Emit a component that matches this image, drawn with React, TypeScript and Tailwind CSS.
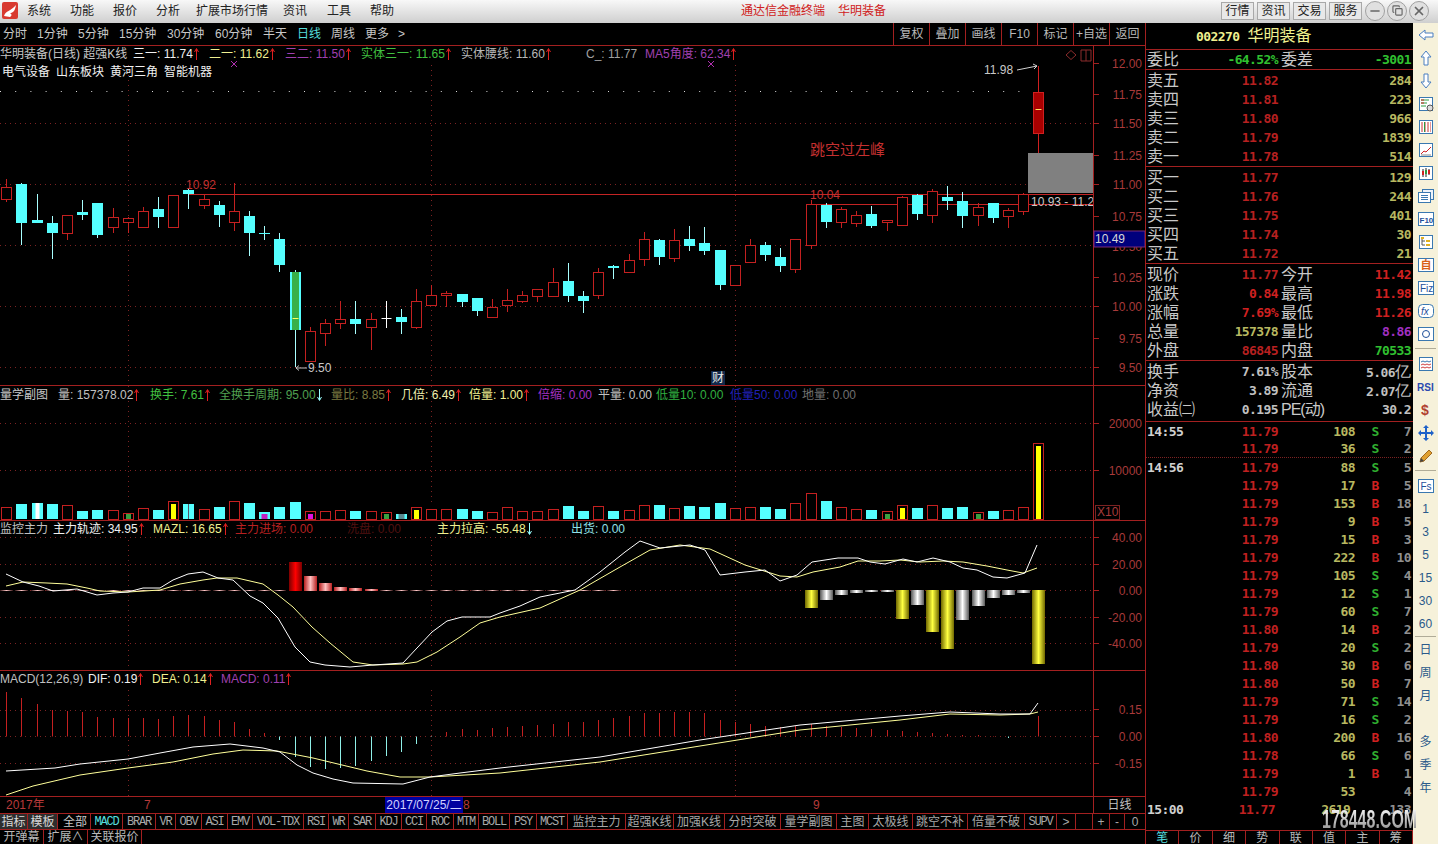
import { Copy, Minus, X } from "lucide-react";
import type { ReactNode } from "react";

const LINE = "#a32020";
const GRID = "#7c2222";
const AXIS = "#a83a3a";
const RED = "#c42020";
const CYAN = "#55ffff";

const xAt = (i: number) => Math.round(6.3 + 15.176 * i);

// high, body top, body bottom, low, kind
type Candle = [number, number, number, number, "r" | "c" | "w"];
const candles: Candle[] = [
  [179, 187, 199, 202, "r"], [183, 184, 223, 245, "c"], [194, 220, 223, 223, "c"], [216, 223, 233, 259, "c"],
  [215, 215, 233, 240, "r"], [200, 212, 215, 220, "c"], [203, 203, 235, 238, "c"], [208, 217, 227, 233, "r"],
  [217, 218, 222, 233, "r"], [207, 211, 227, 227, "r"], [197, 209, 217, 228, "c"], [195, 195, 227, 228, "r"],
  [189, 190, 194, 209, "c"], [194, 199, 205, 209, "r"], [201, 205, 215, 227, "c"], [183, 211, 222, 231, "r"],
  [211, 216, 233, 256, "c"], [226, 233, 234, 240, "c"], [233, 239, 265, 272, "c"], [270, 272, 330, 367, "c"],
  [327, 331, 361, 361, "r"], [319, 323, 333, 346, "r"], [301, 319, 323, 329, "r"], [301, 319, 324, 334, "c"],
  [313, 319, 327, 350, "r"], [301, 318, 319, 328, "w"], [309, 317, 322, 334, "c"], [289, 301, 327, 329, "r"],
  [285, 295, 305, 305, "r"], [291, 293, 295, 307, "r"], [294, 294, 302, 307, "c"], [298, 298, 311, 316, "c"],
  [299, 307, 317, 317, "r"], [289, 300, 305, 312, "r"], [291, 295, 301, 303, "r"], [289, 289, 296, 302, "r"],
  [268, 282, 296, 296, "r"], [263, 281, 296, 302, "c"], [291, 296, 301, 313, "c"], [268, 272, 295, 299, "r"],
  [265, 266, 268, 279, "c"], [254, 260, 272, 272, "r"], [232, 239, 259, 266, "r"], [239, 240, 257, 265, "c"],
  [229, 240, 258, 262, "r"], [226, 239, 246, 251, "c"], [227, 243, 251, 255, "c"], [250, 250, 285, 290, "c"],
  [265, 265, 285, 285, "r"], [239, 245, 262, 262, "r"], [242, 245, 255, 261, "c"], [248, 257, 266, 272, "c"],
  [239, 239, 269, 273, "r"], [200, 204, 245, 249, "r"], [203, 205, 222, 228, "c"], [207, 209, 222, 228, "r"],
  [211, 215, 223, 227, "r"], [206, 214, 226, 228, "c"], [220, 220, 222, 231, "r"], [196, 197, 225, 225, "r"],
  [194, 195, 214, 220, "c"], [189, 191, 215, 223, "r"], [186, 197, 201, 210, "c"], [192, 201, 216, 228, "c"],
  [203, 207, 215, 226, "r"], [203, 203, 218, 223, "c"], [208, 210, 216, 228, "r"], [193, 194, 211, 215, "r"],
  [66, 92, 133, 153, "r"],
];

const volTops = [
  507, 504, 503, 504, 505, 511, 510, 510, 513, 508, 510, 501, 504, 509, 507, 501, 503, 512, 507, 502, 511, 511, 510,
  511, 511, 512, 514, 507, 509, 509, 509, 511, 512, 507, 511, 511, 509, 506, 511, 506, 511, 510, 505, 505, 508, 506,
  507, 503, 508, 507, 507, 509, 503, 493, 501, 507, 509, 510, 511, 505, 508, 505, 508, 507, 512, 511, 510, 507, 443,
];
const volInner: Record<number, string> = {
  8: "#3aa040", 11: "#ffff00", 17: "#c020c0", 20: "#e010e0", 25: "#3aa040", 27: "#ffff00",
  58: "#3aa040", 59: "#ffff00", 64: "#3aa040", 68: "#ffff00", 26: "#5a8a90",
};
const volCyan = [1, 2, 3, 5, 6, 10, 12, 14, 16, 17, 18, 19, 23, 26, 30, 31, 37, 38, 40, 43, 45, 46, 47, 50, 51, 54, 57, 60, 62, 63, 65];

const redBars: [number, number, string][] = [
  [19, 562, "url(#gRed)"], [20, 576, "url(#gPink)"], [21, 583, "url(#gPink)"], [22, 587, "url(#gPink)"], [23, 588, "url(#gPink)"], [24, 589, "url(#gPink)"],
];
const lowBars: [number, number, string][] = [
  [53, 608, "url(#gYel)"], [54, 600, "url(#gWht)"], [55, 595, "url(#gWht)"], [56, 593, "url(#gWht)"], [57, 592, "url(#gWht)"], [58, 592, "url(#gWht)"],
  [59, 619, "url(#gYel)"], [60, 605, "url(#gWht)"], [61, 632, "url(#gYel)"], [62, 649, "url(#gYel)"], [63, 620, "url(#gWht)"], [64, 606, "url(#gWht)"],
  [65, 598, "url(#gWht)"], [66, 595, "url(#gWht)"], [67, 593, "url(#gWht)"], [68, 664, "url(#gYel)"],
];

const macdTops = [
  692, 698, 704, 710, 711, 712, 717, 718, 718, 718, 719, 716, 715, 716, 720, 722, 729, 733, 740, 757, 767, 769, 768, 766, 761, 756, 752, 744, 737,
  732, 729, 730, 728, 727, 726, 725, 724, 722, 722, 720, 718, 716, 713, 713, 712, 712, 713, 720, 722, 724, 726, 727, 726, 724, 726, 727, 728, 729,
  730, 731, 732, 733, 734, 735, 735, 736, 738, 736, 716,
];

const monWhite = "6,574 23,582 39,586 53,591 77,589 97,595 113,593 128,592 143,588 160,588 173,580 188,574 203,572 218,578 233,580 250,596 263,603 278,618 295,647 310,662 325,665 350,667 373,665 403,663 417,648 432,632 447,621 462,617 490,617 500,613 520,606 540,597 575,590 600,572 625,552 640,541 660,548 690,545 705,550 720,575 745,572 765,570 780,581 797,575 812,562 838,558 858,558 870,562 885,564 903,559 917,562 933,558 950,562 963,568 977,570 993,577 1007,578 1025,573 1037,545";
const monYellow = "6,586 23,582 47,583 67,584 87,588 100,591 128,592 160,590 180,584 203,580 217,578 237,578 263,584 278,595 293,607 312,627 330,643 353,662 373,665 403,664 417,662 437,652 460,637 480,623 500,617 540,608 580,590 620,567 650,550 680,545 710,549 745,565 780,576 797,577 813,572 840,567 858,561 880,561 900,560 920,562 943,561 963,562 987,566 1007,570 1023,573 1037,568";
const macdWhite = "6,771 55,768 80,764 128,759 160,753 193,747 230,744 263,748 280,752 297,765 313,773 333,779 353,783 403,784 430,777 460,773 500,768 600,757 700,740 800,725 900,716 950,712 1000,714 1030,714 1038,703";
const macdYellow = "6,795 33,786 80,775 128,768 173,762 213,754 243,750 277,751 313,758 367,771 400,777 430,777 500,773 600,762 700,746 800,730 900,720 950,714 1000,715 1030,714 1038,712";

const tabs: [string, string, string][] = [
  ["指标", "w-[28px]", "bg-[#2e2e2e] text-[#d8d8d8]"], ["模板", "w-[30px]", "bg-[#2e2e2e] text-[#d8d8d8] mr-[2px]"], ["全部", "w-[31px]", "text-[#c8c8c8]"],
  ["MACD", "w-[32px]", "text-[#55dddd]"], ["BRAR", "w-[33px]", ""], ["VR", "w-[20px]", ""], ["OBV", "w-[26px]", ""], ["ASI", "w-[26px]", ""], ["EMV", "w-[25px]", ""],
  ["VOL-TDX", "w-[51px]", ""], ["RSI", "w-[25px]", ""], ["WR", "w-[20px]", ""], ["SAR", "w-[27px]", ""], ["KDJ", "w-[26px]", ""], ["CCI", "w-[25px]", ""],
  ["ROC", "w-[27px]", ""], ["MTM", "w-[25px]", ""], ["BOLL", "w-[31px]", ""], ["PSY", "w-[27px]", ""], ["MCST", "w-[31px]", ""], ["监控主力", "w-[58px]", ""],
  ["超强K线", "w-[48px]", ""], ["加强K线", "w-[51px]", ""], ["分时突破", "w-[56px]", ""], ["量学副图", "w-[56px]", ""], ["主图", "w-[32px]", ""],
  ["太极线", "w-[44px]", ""], ["跳空不补", "w-[55px]", ""], ["倍量不破", "w-[57px]", ""], ["SUPV", "w-[32px]", ""], [">", "w-[19px]", ""],
];

const periods: [string, string, string?][] = [
  ["分时", "w-[34px]"], ["1分钟", "w-[41px]"], ["5分钟", "w-[41px]"], ["15分钟", "w-[48px]"], ["30分钟", "w-[48px]"], ["60分钟", "w-[48px]"],
  ["半天", "w-[34px]"], ["日线", "w-[34px]", "text-[#55dddd]"], ["周线", "w-[34px]"], ["更多", "w-[33px]"], [">", "w-[14px]"],
];

const ticks: [string, string, string, string, string][] = [
  ["14:55", "11.79", "108", "S", "7"], ["", "11.79", "36", "S", "2"], ["14:56", "11.79", "88", "S", "5"], ["", "11.79", "17", "B", "5"],
  ["", "11.79", "153", "B", "18"], ["", "11.79", "9", "B", "5"], ["", "11.79", "15", "B", "3"], ["", "11.79", "222", "B", "10"],
  ["", "11.79", "105", "S", "4"], ["", "11.79", "12", "S", "1"], ["", "11.79", "60", "S", "7"], ["", "11.80", "14", "B", "2"],
  ["", "11.79", "20", "S", "2"], ["", "11.80", "30", "B", "6"], ["", "11.80", "50", "B", "7"], ["", "11.79", "71", "S", "14"],
  ["", "11.79", "16", "S", "2"], ["", "11.80", "200", "B", "16"], ["", "11.78", "66", "S", "6"], ["", "11.79", "1", "B", "1"],
  ["", "11.79", "53", "", "4"], ["15:00", "11.77", "2619", "", "133"],
];

const NUM = "font-['DejaVu_Sans_Mono','Liberation_Mono',monospace] font-bold text-[13px] tracking-[-0.6px]";

function Up({ down }: { down?: boolean }) {
  return (
    <svg width={5} height={12} viewBox="0 0 5 12" className="ml-px inline align-[-2px]">
      {down ? (
        <path d="M2.500 0v11M0.500 8l2 3.500 2-3.500" fill="none" stroke="#9ff" />
      ) : (
        <path d="M2.500 12V1M0.500 4l2-3.500 2 3.500" fill="none" stroke="#e02020" />
      )}
    </svg>
  );
}

function Wave({ top, h, children }: { top: number; h: number; children: ReactNode }) {
  return (
    <svg width={1145} height={h} viewBox={`0 ${top} 1145 ${h}`} className="block">
      <line x1={0} x2={1145} y1={top + 0.5} y2={top + 0.5} stroke={LINE} />
      <line x1={1093.5} x2={1093.5} y1={top} y2={top + h} stroke={LINE} />
      {children}
    </svg>
  );
}

function Dots({ ys, top, bottom }: { ys: number[]; top: number; bottom: number }) {
  return (
    <g stroke={GRID} strokeDasharray="1 4">
      {ys.map((y) => (
        <line key={y} x1={0} x2={1093} y1={y + 0.5} y2={y + 0.5} />
      ))}
      {[128.5, 431.5, 735.5].map((x) => (
        <line key={x} x1={x} x2={x} y1={top} y2={bottom} />
      ))}
    </g>
  );
}

function AxisLabels({ items }: { items: [string, number][] }) {
  return (
    <g>
      {items.map(([t, y]) => (
        <g key={t}>
          <line x1={1094} x2={1099} y1={y + 0.5} y2={y + 0.5} stroke={LINE} />
          <text x={1142} y={y + 4.5} textAnchor="end" fill={AXIS} fontSize={12}>
            {t}
          </text>
        </g>
      ))}
    </g>
  );
}

function MainChart() {
  return (
    <Wave top={45} h={340}>
      <Dots ys={[123, 184, 245, 306, 367]} top={65} bottom={385} />
      <line x1={0} x2={1030} y1={91.5} y2={91.5} stroke="#d8d8d8" strokeDasharray="1 14.2" />
      <path d="M231 61l6 6m0-6l-6 6M708 61l6 6m0-6l-6 6" stroke="#b030b0" />
      <rect x={1028} y={153} width={65} height={40} fill="#808080" />
      <line x1={188} x2={1093} y1={194.5} y2={194.5} stroke="#c42424" />
      <line x1={812} x2={1093} y1={204.5} y2={204.5} stroke="#c42424" />
      {candles.map(([hi, top, bot, lo, kind], i) => {
        const x = xAt(i) + 0.5;
        if (i === 68) {
          return (
            <g key={i}>
              <line x1={x} x2={x} y1={hi} y2={lo} stroke="#d02020" />
              <rect x={x - 5} y={top + 0.5} width={10} height={bot - top} fill="#a80000" stroke="#d02020" />
              <line x1={x - 3} x2={x + 3} y1={109.5} y2={109.5} stroke="#ffe060" />
            </g>
          );
        }
        if (kind === "r") {
          return (
            <g key={i}>
              <line x1={x} x2={x} y1={hi} y2={lo} stroke={RED} />
              <rect x={x - 5} y={top + 0.5} width={10} height={Math.max(bot - top, 1)} fill="#000" stroke={RED} />
            </g>
          );
        }
        if (kind === "w") {
          return (
            <g key={i}>
              <line x1={x} x2={x} y1={hi} y2={lo} stroke="#fff" />
              <line x1={x - 5} x2={x + 5} y1={top + 0.5} y2={top + 0.5} stroke="#fff" />
            </g>
          );
        }
        return (
          <g key={i}>
            <line x1={x} x2={x} y1={hi} y2={lo} stroke="#a8ffff" />
            <rect x={x - 5.5} y={top} width={11} height={Math.max(bot - top, 1)} fill={CYAN} />
            {i === 19 && (
              <>
                <rect x={x - 3.5} y={top} width={7} height={bot - top} fill="#38b048" />
                <line x1={x - 3} x2={x + 3} y1={318.5} y2={318.5} stroke="#ffff60" />
              </>
            )}
          </g>
        );
      })}
      <text x={186} y={189} fill="#c43030" fontSize={12}>10.92</text>
      <text x={810} y={199} fill="#c43030" fontSize={12}>10.04</text>
      <path d="M296 368h11M299 365.5l-3 2.5 3 2.5" fill="none" stroke="#c0c0c0" />
      <text x={308} y={372} fill="#c8c8c8" fontSize={12}>9.50</text>
      <text x={984} y={74} fill="#c8c8c8" fontSize={12}>11.98</text>
      <path d="M1017 70l20-4M1033 64l4 2-3 3" fill="none" stroke="#d0d0d0" />
      <text x={810} y={155} fill="#c43030" fontSize={15}>跳空过左峰</text>
      <clipPath id="cutLabel">
        <rect x={1030} y={190} width={63} height={20} />
      </clipPath>
      <text x={1031} y={206} fill="#c8c8c8" fontSize={12} clipPath="url(#cutLabel)">10.93 - 11.25</text>
      <path d="M1066 55l5-4.500 5 4.500-5 4.500zM1081 50h10v11h-10zM1086 50v11" fill="none" stroke="#8c2c2c" />
      <AxisLabels
        items={[
          ["12.00", 63], ["11.75", 94], ["11.50", 123], ["11.25", 155], ["11.00", 184], ["10.75", 216],
          ["10.50", 246], ["10.25", 277], ["10.00", 306], ["9.75", 338], ["9.50", 367],
        ]}
      />
      <rect x={1094} y={231} width={51} height={16} fill="#00007c" stroke="#7a2a7a" />
      <text x={1095} y={243} fill="#d8d8d8" fontSize={12}>10.49</text>
      <rect x={711} y={371} width={14} height={14} fill="#12284a" />
      <text x={712} y={382} fill="#e8e8e8" fontSize={12}>财</text>
    </Wave>
  );
}

function VolumeChart() {
  return (
    <Wave top={385} h={135}>
      <Dots ys={[423, 470]} top={386} bottom={505} />
      {volTops.map((top, i) => {
        const x = xAt(i) + 0.5;
        if (volCyan.includes(i)) {
          return (
            <g key={i}>
              <rect x={x - 5.5} y={top} width={11} height={519 - top} fill={CYAN} />
              {i === 2 && <rect x={x - 2} y={top} width={4} height={519 - top} fill="#fff" />}
              {i === 12 && <line x1={x} x2={x} y1={top} y2={519} stroke="#556" />}
              {volInner[i] && <rect x={x - 3} y={514} width={6} height={5} fill={volInner[i]} />}
            </g>
          );
        }
        return (
          <g key={i}>
            <rect x={x - 5} y={top + 0.5} width={10} height={519 - top} fill="#000" stroke={RED} strokeWidth={1} />
            {volInner[i] && (
              <rect x={x - 2.5} y={volInner[i] === "#ffff00" ? top + 3 : 514} width={5} height={volInner[i] === "#ffff00" ? 516 - top : 5} fill={volInner[i]} />
            )}
          </g>
        );
      })}
      <AxisLabels items={[["20000", 423], ["10000", 470]]} />
      <rect x={1095.500} y={505.500} width={24} height={14} fill="none" stroke="#7c2222" />
      <text x={1097} y={516} fill={AXIS} fontSize={12}>X10</text>
    </Wave>
  );
}

function MonitorChart() {
  return (
    <Wave top={520} h={150}>
      <defs>
        <linearGradient id="gRed">
          <stop offset="0" stopColor="#7a0000" />
          <stop offset="0.5" stopColor="#ff0000" />
          <stop offset="1" stopColor="#7a0000" />
        </linearGradient>
        <linearGradient id="gPink">
          <stop offset="0" stopColor="#b82020" />
          <stop offset="0.5" stopColor="#ffc0c0" />
          <stop offset="1" stopColor="#b82020" />
        </linearGradient>
        <linearGradient id="gDash">
          <stop offset="0" stopColor="#301010" />
          <stop offset="0.5" stopColor="#ffc8c8" />
          <stop offset="1" stopColor="#301010" />
        </linearGradient>
        <linearGradient id="gYel">
          <stop offset="0" stopColor="#706800" />
          <stop offset="0.5" stopColor="#ffff40" />
          <stop offset="1" stopColor="#706800" />
        </linearGradient>
        <linearGradient id="gWht">
          <stop offset="0" stopColor="#585858" />
          <stop offset="0.5" stopColor="#ffffff" />
          <stop offset="1" stopColor="#585858" />
        </linearGradient>
      </defs>
      <Dots ys={[537, 564, 590, 617, 643]} top={540} bottom={670} />
      {Array.from({ length: 41 }, (_, i) => (
        <rect key={i} x={xAt(i) - 6} y={590} width={13} height={1} fill="url(#gDash)" />
      ))}
      {redBars.map(([i, top, fill]) => (
        <rect key={i} x={xAt(i) - 6} y={top} width={13} height={591 - top} fill={fill} />
      ))}
      {lowBars.map(([i, bot, fill]) => (
        <rect key={i} x={xAt(i) - 6} y={590} width={13} height={bot - 590} fill={fill} />
      ))}
      <polyline points={monYellow} fill="none" stroke="#ffff9a" />
      <polyline points={monWhite} fill="none" stroke="#fff" />
      <AxisLabels items={[["40.00", 537], ["20.00", 564], ["0.00", 590], ["-20.00", 617], ["-40.00", 643]]} />
    </Wave>
  );
}

function MacdChart() {
  return (
    <Wave top={670} h={126}>
      <Dots ys={[710, 736, 763]} top={690} bottom={796} />
      {macdTops.map((top, i) => {
        const x = xAt(i) + 0.5;
        return <line key={i} x1={x} x2={x} y1={top} y2={736.5} stroke={top > 736 ? "#8ff0e8" : RED} />;
      })}
      <polyline points={macdYellow} fill="none" stroke="#ffff9a" />
      <polyline points={macdWhite} fill="none" stroke="#fff" />
      <AxisLabels items={[["0.15", 709], ["0.00", 736], ["-0.15", 763]]} />
    </Wave>
  );
}

function QuoteRow({ label, price, vol, color = "text-[#b8b860]" }: { label: string; price: string; vol: string; color?: string }) {
  return (
    <div className="flex h-[19px] items-center pl-[1px] pr-[2px]">
      <span className="w-[34px] text-[16px] text-[#c8c8c8]">{label}</span>
      <span className={`${NUM} w-[97px] text-right text-[#b82020]`}>{price}</span>
      <span className={`${NUM} flex-1 text-right ${color}`}>{vol}</span>
    </div>
  );
}

function InfoRow({ a, b, ac, c, d, dc }: { a: string; b: string; ac: string; c: ReactNode; d: ReactNode; dc: string }) {
  return (
    <div className="flex h-[19px] items-center pl-[1px] pr-[2px]">
      <span className="w-[34px] text-[16px] whitespace-nowrap text-[#c8c8c8]">{a}</span>
      <span className={`${NUM} w-[97px] text-right ${ac}`}>{b}</span>
      <span className="ml-[3px] text-[16px] whitespace-nowrap text-[#c8c8c8]">{c}</span>
      <span className={`${NUM} flex-1 text-right ${dc}`}>{d}</span>
    </div>
  );
}

function Yi() {
  return <span className="text-[16px] font-normal tracking-normal">亿</span>;
}

function ToolIcon({ children }: { children: ReactNode }) {
  return (
    <div className="flex h-[23px] items-center justify-center">
      <svg width={18} height={18} viewBox="0 0 18 18">
        {children}
      </svg>
    </div>
  );
}

function ToolText({ children }: { children?: ReactNode }) {
  return <div className="flex h-[23px] items-center justify-center text-[12px] text-[#2a5a8a]">{children}</div>;
}

function Frame({ children }: { children: ReactNode }) {
  return (
    <>
      <rect x={2.500} y={2.500} width={13} height={13} fill="#fff" stroke="#3a78b0" />
      {children}
    </>
  );
}

function Toolbar() {
  const arrow = "#4a7ec0";
  return (
    <div className="flex w-[25px] flex-col bg-[#f6f1da]">
      <ToolIcon>
        <path d="M2 9l6-5v3h8v4H8v3z" fill="#fff" stroke={arrow} />
      </ToolIcon>
      <ToolIcon>
        <path d="M9 2l5 6h-3v8H7V8H4z" fill="#fff" stroke={arrow} />
      </ToolIcon>
      <ToolIcon>
        <path d="M9 16l5-6h-3V2H7v8H4z" fill="#fff" stroke={arrow} />
      </ToolIcon>
      <ToolIcon>
        <Frame>
          <path d="M4 5h8M4 8h6M4 11h5" stroke="#2a9a40" />
          <path d="M4 5h3M4 8h3" stroke="#d02020" />
          <circle cx={13} cy={13} r={3} fill="#ddd" stroke="#555" />
        </Frame>
      </ToolIcon>
      <ToolIcon>
        <Frame>
          <path d="M4 5h10M4 7h10M4 9h10M4 11h10M4 13h10" stroke="#c83030" strokeDasharray="2 1" />
          <path d="M7.500 4v10" stroke="#2a9a40" />
        </Frame>
      </ToolIcon>
      <ToolIcon>
        <Frame>
          <path d="M4 13l3-3 2 1 5-5" fill="none" stroke="#d02020" />
          <path d="M4 14h10" stroke="#888" />
        </Frame>
      </ToolIcon>
      <ToolIcon>
        <Frame>
          <path d="M6 5v8M9 4v9M12 5v6" stroke="#222" />
          <rect x={5} y={7} width={2} height={4} fill="#d02020" />
          <rect x={8} y={6} width={2} height={4} fill="#2a9a40" />
          <rect x={11} y={6} width={2} height={4} fill="#d02020" />
        </Frame>
      </ToolIcon>
      <ToolIcon>
        <rect x={5.500} y={2.500} width={11} height={10} fill="#eef3fa" stroke="#3a78b0" />
        <rect x={1.500} y={5.500} width={12} height={10} fill="#fff" stroke="#3a78b0" />
        <path d="M4 8.500h7M4 10.500h7M4 12.500h7" stroke="#3a78b0" />
      </ToolIcon>
      <ToolIcon>
        <rect x={1.500} y={2.500} width={15} height={13} fill="#fff" stroke="#3a78b0" />
        <text x={2.500} y={12.500} fontSize={8} fill="#1f4f9a" fontWeight={700}>F10</text>
      </ToolIcon>
      <ToolIcon>
        <Frame>
          <path d="M5 5v7h3M5 8h3" fill="none" stroke="#555" />
          <rect x={4} y={4} width={3} height={2} fill="#e0b020" />
          <rect x={9} y={7} width={4} height={2} fill="#e0b020" />
          <rect x={9} y={11} width={4} height={2} fill="#e0b020" />
        </Frame>
      </ToolIcon>
      <ToolIcon>
        <rect x={1.500} y={2.500} width={15} height={13} fill="#fff" stroke="#3a78b0" />
        <text x={3.500} y={13} fontSize={11} fontWeight={700} fill="#d86018">自</text>
      </ToolIcon>
      <ToolIcon>
        <rect x={1.500} y={2.500} width={15} height={13} fill="#fff" stroke="#3a78b0" />
        <text x={3} y={13} fontSize={10} fill="#1f4f9a">Fiz</text>
      </ToolIcon>
      <ToolIcon>
        <rect x={1.500} y={2.500} width={15} height={13} rx={4} fill="#fff" stroke="#3a78b0" />
        <text x={4} y={13} fontSize={10} fontStyle="italic" fill="#1f4f9a">fx</text>
      </ToolIcon>
      <ToolIcon>
        <rect x={1.500} y={2.500} width={15} height={13} fill="#fff" stroke="#3a78b0" />
        <circle cx={9} cy={9} r={3.500} fill="none" stroke="#1f4f9a" />
      </ToolIcon>
      <div className="mx-[2px] my-[3px] h-px bg-[#b0ac98]" />
      <ToolIcon>
        <Frame>
          <path d="M4 7l2-1 2 1 2-1 2 1 2-1" fill="none" stroke="#3a78b0" />
          <path d="M4 10l2-1 2 1 2-1 2 1 2-1M4 13l2-1 2 1 2-1 2 1 2-1" fill="none" stroke="#d04040" />
        </Frame>
      </ToolIcon>
      <ToolIcon>
        <text x={0} y={13} fontSize={10} fontWeight={700} fill="#2a4ab0">RSI</text>
      </ToolIcon>
      <ToolIcon>
        <text x={4} y={14} fontSize={14} fontWeight={700} fill="#b04030">$</text>
      </ToolIcon>
      <ToolIcon>
        <path d="M9 1l3 3h-2v4h4V6l3 3-3 3v-2h-4v4h2l-3 3-3-3h2v-4H4v2L1 9l3-3v2h4V4H6z" fill="#1f62c8" />
      </ToolIcon>
      <ToolIcon>
        <path d="M3 15l1-4 8-8 3 3-8 8z" fill="#e0a030" stroke="#a06820" />
        <path d="M3 15l1-4 3 3z" fill="#444" />
      </ToolIcon>
      <div className="mx-[2px] my-[3px] h-px bg-[#b0ac98]" />
      <ToolIcon>
        <rect x={1.500} y={2.500} width={15} height={13} fill="#fff" stroke="#3a78b0" />
        <text x={3.500} y={13} fontSize={10} fill="#1f4f9a">Fs</text>
      </ToolIcon>
      {["1", "3", "5", "15", "30", "60"].map((t) => (
        <ToolText key={t}>{t}</ToolText>
      ))}
      <div className="mx-[2px] my-px h-px bg-[#b0ac98]" />
      {["日", "周", "月", "", "多", "季", "年"].map((t, i) => (
        <ToolText key={i}>{t}</ToolText>
      ))}
    </div>
  );
}

export default function App() {
  return (
    <div className="flex h-[844px] w-[1438px] flex-col overflow-hidden bg-black font-['Liberation_Sans','Noto_Sans_CJK_SC',sans-serif] text-[12px] leading-none">
      {/* title bar */}
      <div className="flex h-[23px] items-center bg-linear-to-b from-[#f8f8f8] to-[#cfcfcf] pb-[2px] text-[#222]">
        <div className="ml-[2px] mr-[9px] flex h-[17px] w-[16px] items-center justify-center rounded-[2px] bg-[#d83a30]">
          <svg width={14} height={14} viewBox="0 0 14 14">
            <path d="M1 12C3 6 7 8 13 1c-1 6-3 8-6 8 2 1 2 3 0 4-2 0-4-1-6-1z" fill="#fff" />
          </svg>
        </div>
        <span className="w-[43px]">系统</span>
        <span className="w-[43px]">功能</span>
        <span className="w-[43px]">报价</span>
        <span className="w-[40px]">分析</span>
        <span className="w-[87px]">扩展市场行情</span>
        <span className="w-[44px]">资讯</span>
        <span className="w-[43px]">工具</span>
        <span className="w-[371px]">帮助</span>
        <span className="w-[97px] text-[#d02020]">通达信金融终端</span>
        <span className="w-[383px] text-[#d02020]">华明装备</span>
        <div className="flex gap-[3px]">
          {["行情", "资讯", "交易", "服务"].map((t) => (
            <span key={t} className="flex h-[18px] w-[33px] items-center justify-center border border-[#a8a8a8] bg-[#e8e8e8]">
              {t}
            </span>
          ))}
        </div>
        <div className="ml-[3px] flex gap-[2px]">
          <span className="flex h-[20px] w-[20px] items-center justify-center rounded-full border border-[#a0a0a0] bg-[#e0e0e0]">
            <Minus size={14} strokeWidth={2.5} className="text-[#666]" />
          </span>
          <span className="flex h-[20px] w-[20px] items-center justify-center rounded-full border border-[#a0a0a0] bg-[#e0e0e0]">
            <Copy size={11} strokeWidth={2.5} className="text-[#666]" />
          </span>
          <span className="flex h-[20px] w-[20px] items-center justify-center rounded-full border border-[#a0a0a0] bg-[#e0e0e0]">
            <X size={14} strokeWidth={3} className="text-[#666]" />
          </span>
        </div>
      </div>

      <div className="flex min-h-0 flex-1">
        {/* left side */}
        <div className="flex w-[1145px] flex-col">
          <div className="flex h-[22px] items-center pl-[3px] text-[#c8c8c8]">
            {periods.map(([t, w, c]) => (
              <span key={t} className={`${w} ${c ?? ""}`}>
                {t}
              </span>
            ))}
            <div className="ml-auto flex h-full">
              {["复权", "叠加", "画线", "F10", "标记", "+自选", "返回"].map((t) => (
                <span key={t} className="flex w-[36px] items-center justify-center border-l border-[#a32020] text-[#b8b8b8]">
                  {t}
                </span>
              ))}
            </div>
          </div>

          <div className="relative">
            <MainChart />
            <div className="absolute left-0 top-[2px] flex h-[14px] items-center whitespace-nowrap">
              <span className="w-[133px] text-[#c8c8c8]">华明装备(日线) 超强K线</span>
              <span className="w-[76px] text-[#f0f0f0]">三一: 11.74<Up /></span>
              <span className="w-[76px] text-[#f0f090]">二一: 11.62<Up /></span>
              <span className="w-[76px] text-[#a040b0]">三二: 11.50<Up /></span>
              <span className="w-[100px] text-[#40c040]">实体三一: 11.65<Up /></span>
              <span className="w-[125px] text-[#b8b8b8]">实体腰线: 11.60<Up /></span>
              <span className="w-[59px] text-[#a0a0a0]">C_: 11.77</span>
              <span className="text-[#a040b0]">MA5角度: 62.34<Up /></span>
            </div>
            <div className="absolute left-[2px] top-[21px] flex gap-[6px] text-[#f0f0f0]">
              <span>电气设备</span>
              <span>山东板块</span>
              <span>黄河三角</span>
              <span>智能机器</span>
            </div>
          </div>

          <div className="relative">
            <VolumeChart />
            <div className="absolute left-0 top-[3px] flex h-[14px] items-center whitespace-nowrap">
              <span className="w-[58px] text-[#c8c8c8]">量学副图</span>
              <span className="w-[92px] text-[#c0c0c0]">量: 157378.02<Up /></span>
              <span className="w-[69px] text-[#40c040]">换手: 7.61<Up /></span>
              <span className="w-[112px] text-[#50a050]">全换手周期: 95.00<Up down /></span>
              <span className="w-[70px] text-[#7a7a40]">量比: 8.85<Up /></span>
              <span className="w-[68px] text-[#f0f0b0]">几倍: 6.49<Up /></span>
              <span className="w-[69px] text-[#f0f090]">倍量: 1.00<Up /></span>
              <span className="w-[60px] text-[#a030c0]">倍缩: 0.00</span>
              <span className="w-[58px] text-[#c0c0c0]">平量: 0.00</span>
              <span className="w-[74px] text-[#30b040]">低量10: 0.00</span>
              <span className="w-[72px] text-[#2020b8]">低量50: 0.00</span>
              <span className="text-[#707070]">地量: 0.00</span>
            </div>
          </div>

          <div className="relative">
            <MonitorChart />
            <div className="absolute left-0 top-[2px] flex h-[14px] items-center whitespace-nowrap">
              <span className="w-[53px] text-[#c0c0c0]">监控主力</span>
              <span className="w-[100px] text-[#f0f0f0]">主力轨迹: 34.95<Up /></span>
              <span className="w-[82px] text-[#f0f090]">MAZL: 16.65<Up /></span>
              <span className="w-[112px] text-[#b82020]">主力进场: 0.00</span>
              <span className="w-[90px] text-[#501010]">洗盘: 0.00</span>
              <span className="w-[134px] text-[#f0f090]">主力拉高: -55.48<Up down /></span>
              <span className="text-[#90e0e8]">出货: 0.00</span>
            </div>
          </div>

          <div className="relative">
            <MacdChart />
            <div className="absolute left-0 top-[2px] flex h-[14px] items-center whitespace-nowrap">
              <span className="w-[88px] text-[#c0c0c0]">MACD(12,26,9)</span>
              <span className="w-[64px] text-[#f0f0f0]">DIF: 0.19<Up /></span>
              <span className="w-[69px] text-[#f0f090]">DEA: 0.14<Up /></span>
              <span className="text-[#a040b0]">MACD: 0.11<Up /></span>
            </div>
          </div>

          {/* date axis */}
          <div className="flex h-[17px] items-center border-t border-[#a32020] pl-[6px] text-[#b83a3a]">
            <span className="w-[138px]">2017年</span>
            <span className="w-[241px]">7</span>
            <span className="flex h-full w-[78px] items-center justify-center bg-[#0000a0] text-[#d0d0ff]">2017/07/25/二</span>
            <span className="w-[350px]">8</span>
            <span className="w-[280px]">9</span>
            <span className="flex h-full flex-1 items-center justify-center border-l border-[#a32020] text-[#c0c0c0]">日线</span>
          </div>

          {/* indicator tabs */}
          <div className="flex h-[17px] border-y border-[#a32020] text-[#a8a8a8]">
            {tabs.map(([t, w, c]) => (
              <span
                key={t}
                className={`flex ${w} items-center justify-center border-r border-[#a32020] ${/^[A-Z]/.test(t) ? "font-['Liberation_Mono',monospace] text-[12px] tracking-[-1.2px]" : ""} ${c}`}
              >
                {t}
              </span>
            ))}
            <span className="flex-1 border-r border-[#a32020]" />
            <span className="flex w-[17px] items-center justify-center border-r border-[#a32020]">+</span>
            <span className="flex w-[15px] items-center justify-center border-r border-[#a32020]">-</span>
            <span className="flex w-[20px] items-center justify-center">0</span>
          </div>

          <div className="flex h-[14px] items-center text-[#b8b8b8]">
            <span className="flex h-full w-[44px] items-center justify-center border-r border-[#a32020]">开弹幕</span>
            <span className="flex h-full w-[44px] items-center justify-center border-r border-[#a32020]">扩展∧</span>
            <span className="flex h-full w-[54px] items-center justify-center border-r border-[#a32020]">关联报价</span>
          </div>
        </div>

        {/* quote panel */}
        <div className="relative flex w-[268px] flex-col border-l border-[#a32020] bg-black">
          <div className="flex h-[27px] items-center gap-[8px] border-b border-[#a32020] pl-[50px] text-[#f0f090]">
            <span className={NUM}>002270</span>
            <span className="text-[16px]">华明装备</span>
          </div>
          <div className="flex h-[20px] items-center border-b border-[#a32020] pl-[1px] pr-[2px]">
            <span className="w-[34px] text-[16px] text-[#c8c8c8]">委比</span>
            <span className={`${NUM} w-[97px] text-right text-[#30c030]`}>-64.52%</span>
            <span className="ml-[3px] text-[16px] text-[#c8c8c8]">委差</span>
            <span className={`${NUM} flex-1 text-right text-[#30c030]`}>-3001</span>
          </div>
          <div className="h-[97px] border-b border-[#a32020] pt-px">
            <QuoteRow label="卖五" price="11.82" vol="284" />
            <QuoteRow label="卖四" price="11.81" vol="223" />
            <QuoteRow label="卖三" price="11.80" vol="966" />
            <QuoteRow label="卖二" price="11.79" vol="1839" />
            <QuoteRow label="卖一" price="11.78" vol="514" />
          </div>
          <div className="h-[97px] border-b border-[#a32020] pt-px">
            <QuoteRow label="买一" price="11.77" vol="129" />
            <QuoteRow label="买二" price="11.76" vol="244" />
            <QuoteRow label="买三" price="11.75" vol="401" />
            <QuoteRow label="买四" price="11.74" vol="30" />
            <QuoteRow label="买五" price="11.72" vol="21" />
          </div>
          <div className="h-[97px] border-b border-[#a32020] pt-px">
            <InfoRow a="现价" b="11.77" ac="text-[#b82020]" c="今开" d="11.42" dc="text-[#d02020]" />
            <InfoRow a="涨跌" b="0.84" ac="text-[#d02020]" c="最高" d="11.98" dc="text-[#d02020]" />
            <InfoRow a="涨幅" b="7.69%" ac="text-[#d02020]" c="最低" d="11.26" dc="text-[#d02020]" />
            <InfoRow a="总量" b="157378" ac="text-[#b8b860]" c="量比" d="8.86" dc="text-[#a030c0]" />
            <InfoRow a="外盘" b="86845" ac="text-[#b82020]" c="内盘" d="70533" dc="text-[#30c030]" />
          </div>
          <div className="h-[61px] border-b border-[#a32020] pt-px">
            <InfoRow a="换手" b="7.61%" ac="text-[#c0c0c0]" c="股本" d={<>5.06<Yi /></>} dc="text-[#c0c0c0]" />
            <InfoRow a="净资" b="3.89" ac="text-[#c0c0c0]" c="流通" d={<>2.07<Yi /></>} dc="text-[#c0c0c0]" />
            <InfoRow a="收益㈡" b="0.195" ac="text-[#c0c0c0]" c={<span className="tracking-[-1px]">PE(动)</span>} d="30.2" dc="text-[#c0c0c0]" />
          </div>
          <div>
            {ticks.map(([time, price, vol, side, count], i) => (
              <div
                key={i}
                className={`flex h-[18px] items-center pl-[1px] pr-[2px] ${NUM} ${i === 1 ? "border-b border-dotted border-[#7c2222]" : ""}`}
              >
                <span className="w-[48px] text-[#d0d0d0]">{time}</span>
                <span className="w-[83px] text-right text-[#c02020]">{price}</span>
                <span className="w-[77px] text-right text-[#b8b860]">{vol}</span>
                <span className={`w-[40px] text-center ${side === "S" ? "text-[#30b030]" : "text-[#d02020]"}`}>{side}</span>
                <span className="flex-1 text-right text-[#909090]">{count}</span>
              </div>
            ))}
          </div>
          <div className="mt-auto grid h-[14px] grid-cols-8 border-t border-[#a32020] text-[#b8b8b8]">
            {["笔", "价", "细", "势", "联", "值", "主", "筹"].map((t, i) => (
              <span key={t} className={`flex items-center justify-center border-r border-[#a32020] ${i === 0 ? "text-[#55dddd]" : ""}`}>
                {t}
              </span>
            ))}
          </div>
          {/* site watermark */}
          <span className="absolute bottom-[12px] left-[176px] origin-left scale-x-[0.64] bg-linear-to-b from-white to-[#8a8a8a] bg-clip-text text-[25px] font-bold text-transparent">
            178448.COM
          </span>
        </div>

        <Toolbar />
      </div>
    </div>
  );
}
